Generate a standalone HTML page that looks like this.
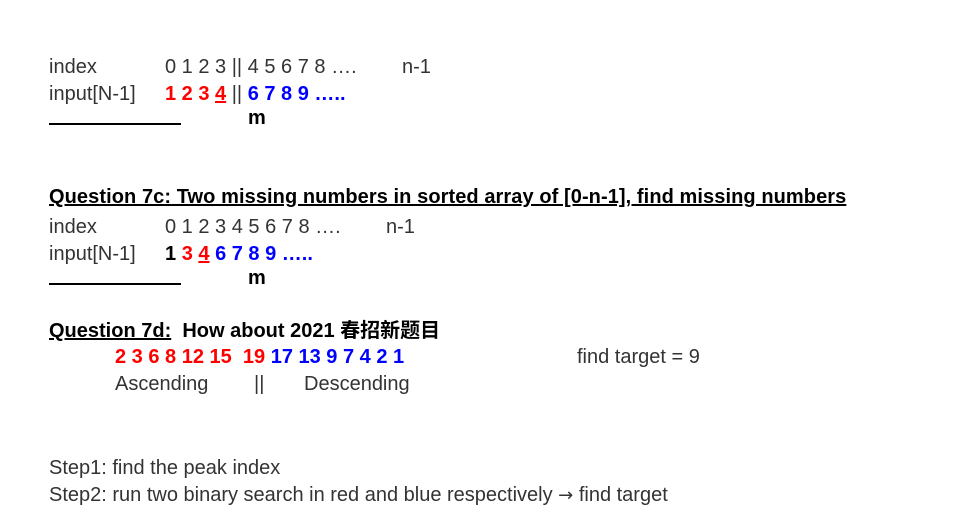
<!DOCTYPE html>
<html><head><meta charset="utf-8"><style>
body{margin:0;width:956px;height:523px;background:#fff;position:relative;overflow:hidden;font-family:"Liberation Sans","Noto Sans CJK SC",sans-serif;font-size:20px;color:#333}
.a{position:absolute;white-space:pre;line-height:22px}
.r{color:#f00;font-weight:bold}.bl{color:#00f;font-weight:bold}.k{color:#000;font-weight:bold}
.u{text-decoration:underline}
.hr{position:absolute;height:2px;background:#000;width:132px;left:49px}
</style></head><body>
<div class="a" style="left:49px;top:56px">index</div>
<div class="a" style="left:165px;top:56px">0 1 2 3 || 4 5 6 7 8 ….</div>
<div class="a" style="left:402px;top:56px">n-1</div>
<div class="a" style="left:49px;top:83px">input[N-1]</div>
<div class="a" style="left:165px;top:83px"><span class="r">1 2 3 <span class="u">4</span></span> || <span class="bl">6 7 8 9 …..</span></div>
<div class="a k" style="left:248px;top:107px">m</div>
<div class="hr" style="top:123px"></div>

<div class="a k u" style="left:49px;top:186px;letter-spacing:0.08px">Question 7c: Two missing numbers in sorted array of [0-n-1], find missing numbers</div>
<div class="a" style="left:49px;top:216px">index</div>
<div class="a" style="left:165px;top:216px">0 1 2 3 4 5 6 7 8 ….</div>
<div class="a" style="left:386px;top:216px">n-1</div>
<div class="a" style="left:49px;top:243px">input[N-1]</div>
<div class="a" style="left:165px;top:243px"><span class="k">1</span> <span class="r">3 <span class="u">4</span></span> <span class="bl">6 7 8 9 …..</span></div>
<div class="a k" style="left:248px;top:267px">m</div>
<div class="hr" style="top:283px"></div>

<div class="a k" style="left:49px;top:320px"><span class="u">Question 7d:</span>  How about 2021 春招新题目</div>
<div class="a" style="left:115px;top:346px"><span class="r">2 3 6 8 12 15  19</span> <span class="bl">17 13 9 7 4 2 1</span></div>
<div class="a" style="left:577px;top:346px">find target = 9</div>
<div class="a" style="left:115px;top:373px">Ascending</div>
<div class="a" style="left:254px;top:373px">||</div>
<div class="a" style="left:304px;top:373px">Descending</div>

<div class="a" style="left:49px;top:457px">Step1: find the peak index</div>
<div class="a" style="left:49px;top:484px">Step2: run two binary search in red and blue respectively <span style="font-family:'DejaVu Sans',sans-serif;font-size:18px">→</span> find target</div>
</body></html>
